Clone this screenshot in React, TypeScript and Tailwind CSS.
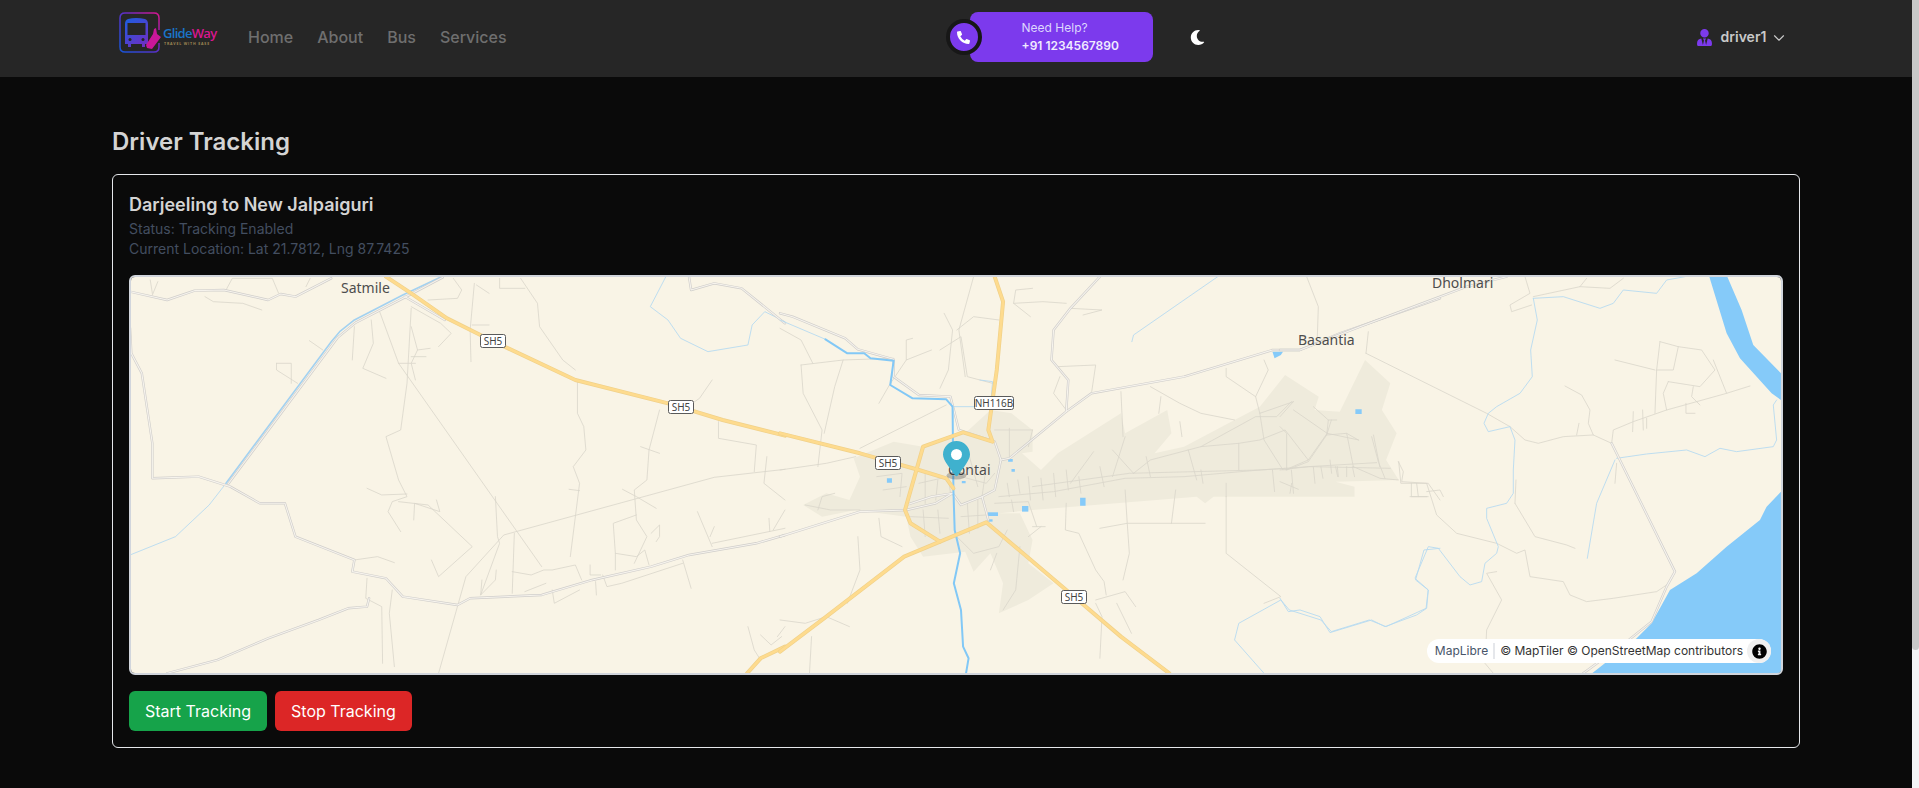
import { ChevronDown } from "lucide-react";
import { FaInfoCircle, FaMoon, FaPhoneAlt, FaUserTie } from "react-icons/fa";

type MapPanel = {
  transform: string;
  area?: string[];
  water?: string[];
  thin?: string[];
  creeks?: string[];
  streams?: string[];
  rivers?: string[];
  roads?: string[];
  highways?: string[];
};

// traced from three crops of the map, each one has its own scale
const panels: MapPanel[] = [
  {
    transform: "translate(125 270) scale(0.4209 0.3333)",
    thin: [
      "M605,125 L650,280 L990,890",
      "M1568,598 L1400,622 L900,795 L810,920 L745,1210",
      "M680,115 L670,340 L655,480 L620,500 L650,630 L670,680 L635,695 L625,725 L655,785",
      "M575,655 L610,675 L670,672",
      "M650,695 L720,705 L825,830 L745,920 L728,870",
      "M740,690 L748,725 L688,700 L686,750",
      "M1075,330 L1075,430 L1090,470 L1095,540 L1065,590 L1080,640 L1058,860",
      "M1055,658 L1080,662",
      "M940,25 L980,100 L985,170 L1040,270 L1070,300",
      "M1270,420 L1245,540 L1240,630 L1210,660 L1215,750 L1240,800 L1210,880",
      "M1225,530 L1270,550",
      "M1182,658 L1215,680 L1262,715",
      "M1215,735 L1160,760 L1165,850 L1165,900",
      "M1165,850 L1215,860 L1235,840 L1245,885",
      "M1250,790 L1270,765 L1270,800 L1262,815",
      "M1395,330 L1365,385 L1325,420",
      "M1410,455 L1410,505 L1500,525 L1495,605",
      "M1525,560 L1518,640 L1568,690",
      "M830,40 L820,180 L822,275",
      "M825,165 L865,165 M835,45 L865,70",
      "M545,170 L540,270",
      "M585,150 L590,220 L565,295 L620,325",
      "M680,170 L695,240 L680,280 L690,330 M650,280 L690,280",
      "M695,240 L725,235 M680,260 L715,260",
      "M680,110 L750,160 L775,190 L745,230",
      "M360,280 L395,280 L395,340 M360,280 L360,300 L410,340",
      "M438,212 L470,240",
      "M190,80 L210,95 L280,100 L325,120",
      "M60,30 L65,70 M78,35 L65,75",
      "M240,60 L255,25 L350,25 L365,70",
      "M430,50 L440,25 M780,25 L800,60 L790,85 L720,90",
      "M890,25 L890,55 L950,55",
      "M1360,725 L1395,830 M1400,770 L1390,800",
      "M1395,820 L1568,775",
      "M1530,745 L1532,785 M1568,720 L1540,780",
      "M1325,870 L1345,955",
      "M1325,880 L1180,940 L1145,950 L1135,915",
      "M880,680 L885,800 L890,820 L845,975",
      "M925,790 L920,970",
      "M848,930 L845,975 L880,930 L882,900",
      "M920,905 L965,915 L995,900 L1015,900 L1070,885 L1085,930",
      "M1000,940 L950,965 M1015,960 L1020,1000 L1080,960",
      "M1105,885 L1105,915 L1130,915 M1118,935 L1120,975",
      "M575,925 L572,985 L610,1010 L612,1180",
      "M635,960 L628,1030 L640,1190",
      "M545,870 L600,860 L640,878",
      "M1480,1070 L1495,1140 L1510,1170",
      "M1510,1095 L1535,1125 L1560,1100",
      "M1568,1070 L1550,1100",
    ],
    creeks: [
      "M1285,20 L1248,110 L1290,150 L1320,205 L1385,245 L1480,225 L1490,165 L1520,125 L1568,155",
      "M240,640 L200,705 L120,800 L12,855",
    ],
    streams: ["M752,20 L660,75 L545,150 L510,185 L490,215 L240,640"],
    roads: [
      "M12,65 L100,90 L165,62 L235,60 L340,90 L370,72 L405,80 L490,25",
      "M755,22 L665,82 L548,158 L505,203 L245,642",
      "M665,80 L760,150",
      "M12,175 L15,250 L40,310 L65,520 L65,625 L175,620 L250,650 L320,700 L380,700 L405,800 L545,870 L540,905 L620,925 L660,980 L790,1005 L820,985 L990,975 L1110,930 L1250,890 L1340,855 L1500,820 L1568,795",
      "M100,1210 L220,1170 L340,1105 L460,1050 L530,1015 L575,1010 L580,985",
      "M1340,20 L1345,60 L1400,40 L1465,55 L1568,160",
    ],
    highways: [
      "M620,20 L680,70 L765,145 L860,205 L1070,330 L1290,400 L1420,450 L1568,497",
      "M1478,1210 L1510,1165 L1568,1130",
    ],
  },
  {
    transform: "translate(780 270) scale(0.4209 0.3333)",
    area: [
      "M55,705 L110,670 L165,690 L190,620 L175,565 L270,515 L340,530 L440,490 L500,420 L550,430 L600,480 L600,545 L575,550 L620,600 L660,550 L810,430 L820,490 L920,420 L930,490 L890,550 L960,530 L1080,450 L1140,410 L1200,315 L1280,380 L1270,420 L1330,425 L1390,270 L1450,340 L1430,420 L1465,490 L1440,570 L1470,630 L1320,635 L1365,650 L1365,680 L1030,680 L1010,700 L990,680 L600,720 L520,730 L570,730 L600,810 L590,880 L650,940 L590,990 L520,1030 L530,940 L500,850 L460,905 L440,845 L340,860 L310,800 L300,740 L180,720 L100,740 Z",
    ],
    water: [
      "M1170,245 L1195,245 L1190,255 L1175,265 Z",
      "M494,727 L518,727 L518,738 L494,738 Z",
      "M575,708 L590,708 L590,725 L575,725 Z",
      "M713,683 L726,683 L726,707 L713,707 Z",
      "M1367,418 L1382,418 L1382,432 L1367,432 Z",
      "M495,748 L505,748 L505,755 L495,755 Z",
      "M542,567 L553,567 L553,575 L542,575 Z",
      "M550,597 L558,597 L558,605 L550,605 Z",
      "M432,633 L441,633 L441,640 L432,640 Z",
      "M254,625 L266,625 L266,638 L254,638 Z",
    ],
    thin: [
      "M600,55 L560,60 L555,100 L595,140",
      "M555,100 L625,95 L680,100",
      "M690,115 L765,120 L720,135",
      "M420,180 L460,140 L520,150",
      "M360,240 L300,270 L300,210 L315,205",
      "M460,20 L425,180 L440,320",
      "M390,130 L410,180 L400,300 L380,355",
      "M380,240 L430,200 L445,320 L475,330 L505,340",
      "M50,285 L150,270 L270,265",
      "M50,285 L55,370 L100,480 L90,590",
      "M0,175 L50,210 L78,280",
      "M150,270 L130,350 L105,490",
      "M235,400 L260,345 L300,270",
      "M395,405 L190,535",
      "M0,600 L110,580 L180,560",
      "M660,290 L750,285 L740,370",
      "M665,320 L650,370 L680,420",
      "M810,365 L815,500",
      "M880,350 L950,400 L1000,430 L1080,450",
      "M905,380 L900,430 M950,455 L955,500",
      "M1060,295 L1060,320 L1130,380 L1140,430 L1220,395",
      "M1150,270 L1160,300 L1130,380",
      "M60,705 L120,720 L190,720 M90,720 L100,680 L130,670",
      "M235,745 L240,800 L290,830",
      "M185,800 L190,900 L160,1000",
      "M0,1050 L60,1060 L110,1040 L165,1070",
      "M75,1100 L70,1210",
      "M600,770 L630,770 M590,800 L620,770",
      "M570,830 L560,960 L530,1020",
      "M680,700 L678,780 L710,790 L750,900 L770,935 L775,975",
      "M760,775 L825,760 L1010,760",
      "M820,660 L825,760 L830,850 L815,930",
      "M930,760 L940,660",
      "M1060,680 L1060,850 L1110,900 L1190,980 L1150,1000",
      "M750,990 L820,965 L845,1010",
      "M750,1000 L765,1040 L760,1165",
      "M800,1000 L835,1090",
      "M1470,575 L1475,640 L1540,640 L1568,690",
      "M1500,640 L1500,680 L1540,680",
      // main street through the built up part, with its side lanes
      "M520,680 L650,665 L820,625 L960,620 L1140,600 L1205,595",
      "M600,650 L830,610 L1140,600 L1260,590 L1450,595",
      "M840,610 L880,570 L1000,530 L1130,440 L1180,440 L1215,395",
      "M1000,530 L1090,520 L1090,600",
      "M1090,520 L1140,510 L1200,480 L1255,570 L1200,600",
      "M1140,430 L1150,510 L1195,600",
      "M1255,570 L1300,490 L1375,510",
      "M1300,490 L1220,420 M1300,490 L1310,450",
      "M1410,495 L1425,590",
      "M840,610 L790,540 M820,500 L790,620 M745,545 L690,640",
      "M970,540 L990,630 M1060,640 L1060,680",
      "M540,640 L545,680 M565,630 L570,670 M590,620 L595,690 M620,625 L625,690 M650,610 L655,680",
      "M680,600 L685,660 M710,620 L715,670 M760,590 L770,650 M870,560 L880,620 M1000,600 L1005,640",
      "M1170,600 L1175,665 M1215,600 L1220,670 M1285,590 L1290,625 M1320,590 L1325,620 M1360,590 L1365,620",
      "M510,480 L600,480 M545,475 L545,560 M600,480 L590,530",
      // town grid
      "M230,620 L290,610 L285,680 M245,660 L300,650",
      "M330,640 L400,620 L405,670 M345,610 L345,700 M375,630 L370,690",
      "M310,740 L400,745 M340,720 L345,800 M375,720 L380,790",
      "M430,740 L490,735 M445,700 L450,790 M470,690 L470,775",
      "M430,620 L490,640 L510,610 M450,560 L470,650 M490,590 L480,680",
      "M510,700 L590,695 L610,770 M550,690 L555,725",
      "M420,800 L460,850 L520,830 L540,780 M515,850 L500,900",
    ],
    creeks: [
      "M1040,20 L840,195 L836,215",
      "M1568,835 L1530,840 L1510,930 L1540,960 L1535,1015 L1440,1070 L1400,1050 L1310,1085 L1285,1050 L1210,1020 L1190,990 L1090,1060 L1080,1110 L1150,1210",
      "M0,150 L108,208",
      "M475,330 L505,335 L500,410 L410,410",
    ],
    rivers: [
      "M108,208 L160,250 L200,250 L215,265 L270,272 L262,345 L315,385 L395,388 L410,410 L412,660 L415,780 L428,850 L413,940 L430,1020 L435,1130 L448,1165 L442,1210",
    ],
    roads: [
      "M0,130 L30,140 L155,205 L185,238 L270,268 L270,320 L330,375 L405,380 L425,480 L510,515 L525,570 L510,660 L480,680 L430,705 L410,670",
      "M480,680 L495,750",
      "M525,570 L545,565 L680,425 L740,370 L960,320 L1170,240 L1235,240 L1330,190 L1568,85",
      "M680,425 L685,330 L645,270 L650,180 L690,115 L760,20",
      "M0,800 L190,725 L300,720 L370,700 L410,670",
      "M300,705 L360,680 L410,670",
    ],
    highways: [
      "M0,490 L190,550 L330,600 L395,625 L412,655",
      "M0,1145 L110,1040 L295,860 L490,757 L680,960 L810,1100 L925,1210",
      "M510,20 L530,95 L515,300 L495,480 L505,515 L435,487 L340,530 L297,720 L310,760 L380,815",
    ],
  },
  {
    transform: "translate(1280 270) scale(0.3333 0.3333)",
    water: [
      "M1288,20 L1342,20 L1385,120 L1420,225 L1503,310 L1503,390 L1475,370 L1380,265 L1340,190 Z",
      "M930,1215 L1070,1105 L1115,1060 L1170,960 L1250,910 L1340,830 L1440,750 L1460,710 L1503,665 L1503,1215 Z",
    ],
    thin: [
      "M258,250 L620,430 L690,470",
      "M265,185 L258,250",
      "M80,20 L115,110 L112,200",
      "M690,470 L735,510 L775,520 L850,500 L940,495 L995,520 L1000,480 L1060,455 L1160,420 L1340,370 L1410,348",
      "M940,495 L925,460 L930,420 L905,375 L855,348 M890,495 L897,460",
      "M1140,215 L1130,300 L1125,430",
      "M1140,215 L1195,230 L1265,240 L1305,300 L1260,350 L1165,335",
      "M1195,230 L1180,300 L1130,300",
      "M1005,270 L1125,300 M1300,270 L1340,370",
      "M1165,335 L1150,370 L1160,420",
      "M1240,350 L1235,380 L1260,405",
      "M1218,400 L1218,430 L1245,430",
      "M1060,425 L1058,485 M1088,420 L1090,480 M1100,445 L1100,475",
      "M705,700 L765,800 L860,825 L885,835",
      "M708,630 L705,700",
      "M355,575 L370,605 L365,635 L440,640 L470,735 L530,790 L650,820 L710,850 L735,840 L750,920 L850,935 L870,975 L920,995 L1000,985 L1130,965 L1160,945",
      "M650,905 L620,910 L665,990 L620,1080 L615,1180 L640,1210",
      "M735,20 L750,70 L690,105 L695,125 L755,105",
      "M760,80 L900,50 L920,25 M900,50 L990,55 L1030,25",
      "M390,680 L440,680 M410,640 L415,680 M440,665 L480,660 L490,680",
      "M0,440 L40,395",
      "M100,410 L145,450 L140,495 L85,575 L20,600",
      "M145,450 L170,450 M140,495 L200,490 L235,510",
      "M200,490 L220,590",
      "M275,500 L295,575 L315,625",
      "M0,600 L85,590 L290,578",
      "M220,590 L300,625 L355,630",
      "M100,590 L105,640 M150,570 L155,610 M172,590 L175,620 M200,590 L200,620",
      "M35,640 L30,670 M0,470 L20,490 L20,600 M0,635 L55,658",
      "M1010,580 L1005,640",
    ],
    creeks: [
      "M760,85 L850,80 L960,115 L1000,100 L1030,60 L1130,70 L1160,30 L1215,20",
      "M760,85 L772,150 L752,240 L757,320 L720,370 L650,410 L625,430 L612,460 L625,485 L690,470 L705,510 L700,600 L700,670 L680,700 L620,715 L620,745 L655,830 L650,850 L615,880 L605,935 L570,945 L540,920 L475,835 L445,830 L405,925 L445,960 L440,1015 L410,1035 L315,1070 L275,1050 L150,1088 L120,1040 L60,1020 L25,1025 L0,985",
      "M1010,565 L1100,552 L1220,540 L1275,560 L1320,535 L1370,545 L1480,530 L1490,510 L1480,405 L1490,390",
      "M1005,570 L950,700 L922,865",
    ],
    roads: [
      "M0,240 L60,240 L240,170 L560,50 L680,20",
      "M995,520 L1185,905 L1160,950 L1115,1055 L1040,1115 L910,1210",
    ],
  },
];

const mapLabels = [
  { text: "Satmile", x: 341, y: 293 },
  { text: "Dholmari", x: 1432, y: 288 },
  { text: "Basantia", x: 1298, y: 345 },
  { text: "Contai", x: 948, y: 475 },
];

const shields = [
  { text: "SH5", x: 493, y: 341, w: 25 },
  { text: "SH5", x: 681, y: 407, w: 25 },
  { text: "SH5", x: 888, y: 463, w: 25 },
  { text: "SH5", x: 1074, y: 597, w: 25 },
  { text: "NH116B", x: 994, y: 403, w: 39 },
];

function Lines({ d, stroke, width }: { d?: string[]; stroke: string; width: number }) {
  return (
    <>
      {d?.map((line) => (
        <path
          key={line}
          d={line}
          fill="none"
          stroke={stroke}
          strokeWidth={width}
          strokeLinejoin="round"
          strokeLinecap="round"
          vectorEffect="non-scaling-stroke"
        />
      ))}
    </>
  );
}

function MapDrawing() {
  return (
    <svg viewBox="131 277 1650 396" className="block w-full h-full">
      <rect x="131" y="277" width="1650" height="396" fill="#f9f4e6" />
      {panels.map((p) => (
        <g key={p.transform} transform={p.transform}>
          {p.area?.map((d) => <path key={d} d={d} fill="#efebdc" />)}
          {p.water?.map((d) => <path key={d} d={d} fill="#85caf9" />)}
          <Lines d={p.thin} stroke="#d9d6ca" width={0.8} />
          <Lines d={p.creeks} stroke="#b7daf0" width={0.9} />
          <Lines d={p.streams} stroke="#a3d1f0" width={1.6} />
          <Lines d={p.roads} stroke="#d0cecb" width={2.4} />
          <Lines d={p.roads} stroke="#f6f3ed" width={1.1} />
          <Lines d={p.rivers} stroke="#82c8f6" width={2} />
          <Lines d={p.highways} stroke="#f0d18a" width={4} />
          <Lines d={p.highways} stroke="#fedb8e" width={2.6} />
        </g>
      ))}
      {mapLabels.map((l) => (
        <text
          key={l.text}
          x={l.x}
          y={l.y}
          fill="#4d4d4d"
          stroke="#f9f4e6"
          strokeWidth={0.6}
          paintOrder="stroke"
          fontSize={14}
          fontFamily="'Noto Sans', sans-serif"
        >
          {l.text}
        </text>
      ))}
      {shields.map((s) => (
        <g key={s.x}>
          <rect x={s.x - s.w / 2} y={s.y - 6.5} width={s.w} height={13} rx={2} fill="#fff" stroke="#5a5a5a" />
          <text
            x={s.x}
            y={s.y + 3.5}
            textAnchor="middle"
            fill="#444"
            fontSize={10}
            fontFamily="'Noto Sans', sans-serif"
          >
            {s.text}
          </text>
        </g>
      ))}
    </svg>
  );
}

function MapMarker() {
  return (
    <svg width="27" height="41" viewBox="0 0 27 41" className="absolute left-[812px] top-[164px]">
      <ellipse cx="13.5" cy="34.5" rx="10" ry="4" fill="#000" opacity="0.22" />
      <path
        d="M27,13.5 C27,19.07 20.25,27 14.75,34.5 C14.02,35.5 12.98,35.5 12.25,34.5 C6.75,27 0,19.22 0,13.5 C0,6.04 6.04,0 13.5,0 C20.96,0 27,6.04 27,13.5 Z"
        fill="#3fb1ce"
      />
      <circle cx="13.5" cy="13.5" r="5.5" fill="#fff" />
    </svg>
  );
}

function Logo() {
  return (
    <svg width="100" height="54" viewBox="0 0 100 54" className="shrink-0">
      <defs>
        <linearGradient id="logoFrame" gradientUnits="userSpaceOnUse" x1="0" y1="42" x2="42" y2="3">
          <stop offset="0" stopColor="#1556d8" />
          <stop offset="0.5" stopColor="#5a30c8" />
          <stop offset="1" stopColor="#e0148c" />
        </linearGradient>
        <linearGradient id="logoBus" gradientUnits="userSpaceOnUse" x1="6" y1="8" x2="30" y2="38">
          <stop offset="0" stopColor="#1a5fe0" />
          <stop offset="1" stopColor="#7a28c0" />
        </linearGradient>
      </defs>
      <path
        d="M40,20 L40,8 Q40,3 35,3 L6,3 Q1,3 1,8 L1,37 Q1,42 6,42 L35,42 Q40,42 40,37 L40,33"
        fill="none"
        stroke="url(#logoFrame)"
        strokeWidth="1.5"
      />
      <path
        d="M9,9 Q17,7 26,9 Q29,10 29,14 L29,34 L26,34 L26,37 L23,37 L23,34 L12,34 L12,37 L9,37 L9,34 L6,34 L6,14 Q6,10 9,9 Z M8.5,13 L8.5,25 L26.5,25 L26.5,13 Z"
        fill="url(#logoBus)"
        fillRule="evenodd"
      />
      <circle cx="11" cy="29.5" r="1.5" fill="#262626" />
      <circle cx="24" cy="29.5" r="1.5" fill="#262626" />
      <path d="M27,35 L34,24 L35,19 L37,18 L38,24 L42,27 L33,39 L28,38 Z" fill="#c9179a" />
      <text x="44" y="28" fontSize="13" fontWeight="600" fontFamily="'Open Sans', sans-serif" letterSpacing="-0.7">
        <tspan fill="#1b74c9">Glide</tspan>
        <tspan fill="#d9178f">Way</tspan>
      </text>
      <text x="45" y="34.5" fontSize="3.6" fontWeight="700" fill="#a08a55" letterSpacing="0.8" fontFamily="'Open Sans', sans-serif">
        TRAVEL WITH EASE
      </text>
    </svg>
  );
}

function Navbar() {
  return (
    <header className="h-[77px] bg-[#262626] flex items-center pl-[119px] pb-[3px]">
      <Logo />
      <nav className="flex items-center gap-6 ml-[29px] text-base font-medium text-[#6f6f6f]">
        <a>Home</a>
        <a>About</a>
        <a>Bus</a>
        <a>Services</a>
      </nav>

      <div className="relative ml-[463px] w-[183px] h-[50px] rounded-lg bg-[#7c3aed] pl-[52px] flex flex-col justify-center text-xs leading-[18px]">
        <span className="absolute -left-6 top-[7px] w-9 h-9 rounded-full bg-[#7c3aed] border-4 border-[#171717] flex items-center justify-center text-white">
          <FaPhoneAlt size={13} />
        </span>
        <span className="text-[#ddd6fe]">Need Help?</span>
        <span className="font-semibold text-[#f0ebff]">+91 1234567890</span>
      </div>

      <FaMoon size={15} className="ml-[37px] text-white" />

      <div className="ml-[491px] flex items-center text-sm font-semibold text-[#c9c9c9]">
        <FaUserTie size={17} className="text-[#7c3aed]" />
        <span className="ml-[8px]">driver1</span>
        <ChevronDown size={18} strokeWidth={1.5} className="ml-1 mt-0.5" />
      </div>
    </header>
  );
}

export default function App() {
  return (
    <div className="h-screen overflow-hidden flex bg-[#0a0a0a] font-['Inter',sans-serif]">
      <div className="flex-1 min-w-0">
        <Navbar />
        <main className="px-[112px] pt-[49px]">
          <h1 className="text-2xl font-semibold text-[#d4d4d4] mb-4">Driver Tracking</h1>
          <section className="border border-gray-200 rounded-md p-4">
            <h2 className="text-lg font-semibold text-[#d4d4d4]">Darjeeling to New Jalpaiguri</h2>
            <p className="text-sm text-[#434e60]">Status: Tracking Enabled</p>
            <p className="text-sm text-[#434e60]">Current Location: Lat 21.7812, Lng 87.7425</p>

            <div className="relative mt-4 h-[400px] border-2 border-gray-300 rounded-md overflow-hidden">
              <MapDrawing />
              <MapMarker />
              <div className="absolute right-[10px] bottom-[10px] h-6 rounded-full bg-white flex items-center pl-2 text-xs text-[#333]">
                <span className="text-[#475569]">MapLibre</span>
                <span className="mx-[5px] w-[2px] h-4 bg-gray-200" />
                <span>© MapTiler © OpenStreetMap contributors</span>
                <span className="ml-1 w-6 h-6 rounded-full bg-[#f0f0f0] flex items-center justify-center">
                  <FaInfoCircle size={15} className="text-black" />
                </span>
              </div>
            </div>

            <div className="flex gap-2 mt-4">
              <button className="h-10 px-4 rounded-md bg-[#16a34a] text-white">Start Tracking</button>
              <button className="h-10 px-4 rounded-md bg-[#dc2626] text-white">Stop Tracking</button>
            </div>
          </section>
        </main>
      </div>
      {/* page scrollbar, headless chrome hides the real one */}
      <div className="w-[7px] shrink-0 bg-[#f3f4f6]">
        <div className="h-[650px] rounded-b-[4px] bg-[#c8c8c8]" />
      </div>
    </div>
  );
}
